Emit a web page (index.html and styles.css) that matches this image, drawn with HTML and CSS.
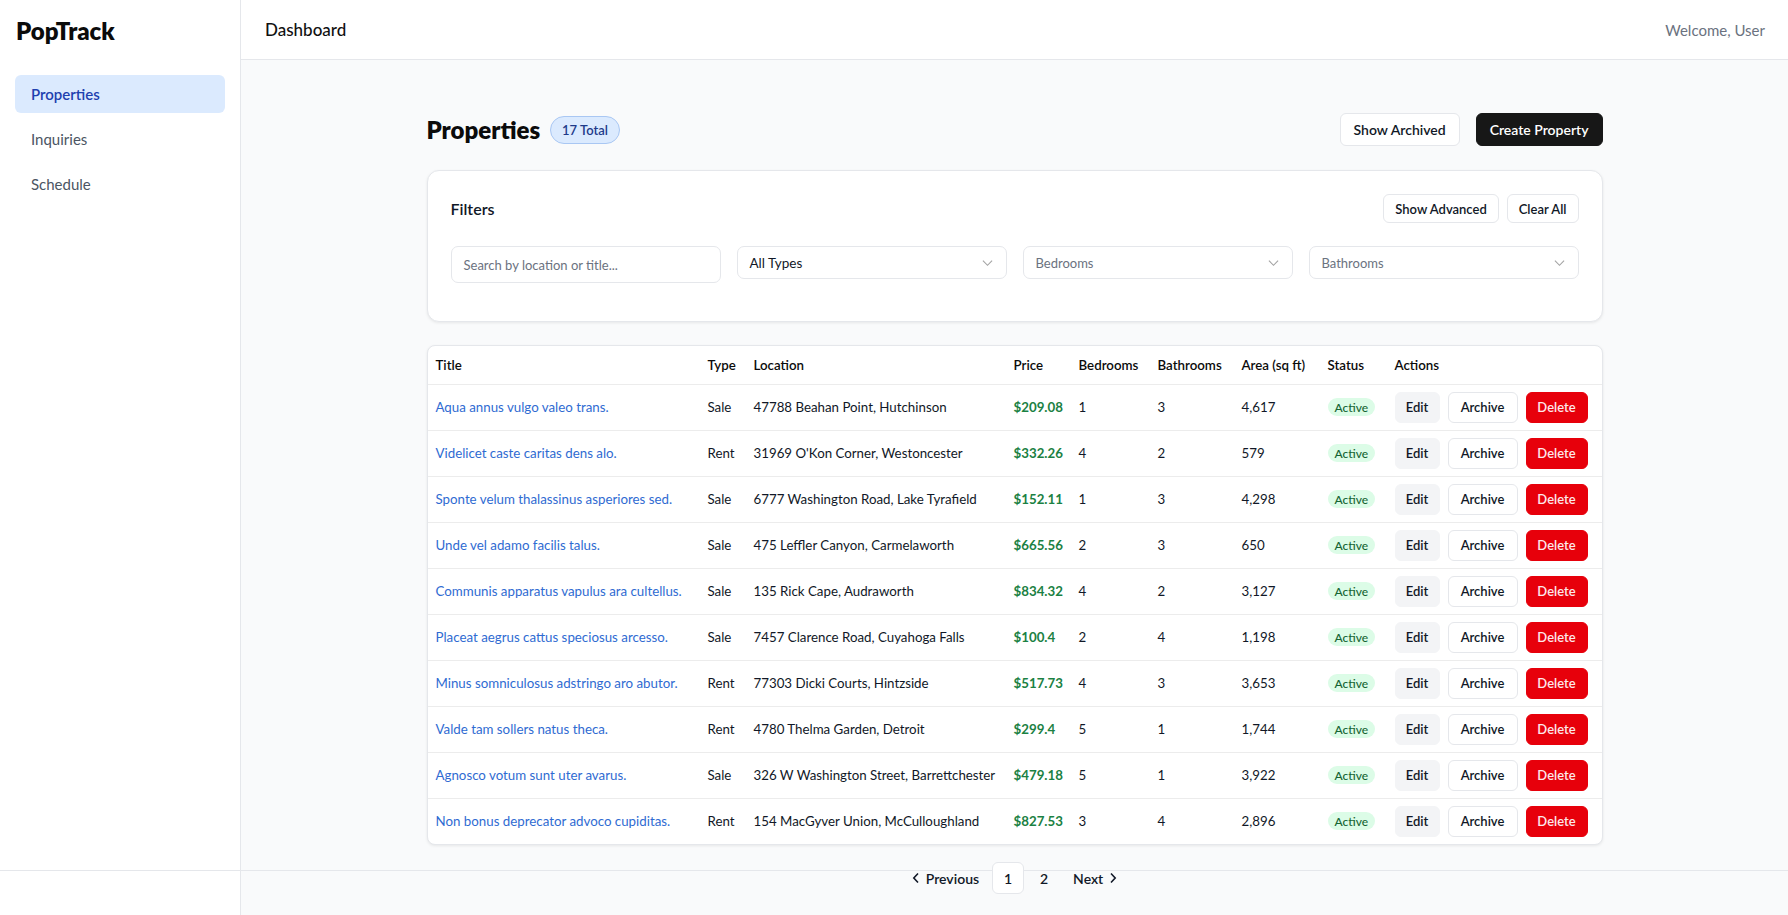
FILE: index.html
```html
<!DOCTYPE html>
<html lang="en">
<head>
<meta charset="utf-8">
<title>PopTrack</title>
<link rel="stylesheet" href="styles.css">
</head>
<body>
<div class="app">
  <aside class="sidebar">
    <div class="brand">PopTrack</div>
    <nav class="nav">
      <a class="nav-item active">Properties</a>
      <a class="nav-item">Inquiries</a>
      <a class="nav-item">Schedule</a>
    </nav>
    <div class="side-footer"></div>
  </aside>
  <div class="main">
    <header class="topbar">
      <div class="topbar-title">Dashboard</div>
      <div class="welcome">Welcome, User</div>
    </header>
    <div class="content">
      <div class="container">
        <div class="page-head">
          <div class="page-title">
            <h1>Properties</h1>
            <span class="total-badge">17 Total</span>
          </div>
          <div class="head-actions">
            <button class="btn btn-outline btn-lg">Show Archived</button>
            <button class="btn btn-dark btn-lg">Create Property</button>
          </div>
        </div>

        <section class="card filters">
          <div class="filters-head">
            <h2>Filters</h2>
            <div class="filters-actions">
              <button class="btn btn-outline btn-sm">Show Advanced</button>
              <button class="btn btn-outline btn-sm">Clear All</button>
            </div>
          </div>
          <div class="filters-grid">
            <div class="input">Search by location or title...</div>
            <div class="select"><span class="val">All Types</span><svg class="chev" viewBox="0 0 12 8"><path d="M1 1.5l5 5 5-5"/></svg></div>
            <div class="select"><span class="ph">Bedrooms</span><svg class="chev" viewBox="0 0 12 8"><path d="M1 1.5l5 5 5-5"/></svg></div>
            <div class="select"><span class="ph">Bathrooms</span><svg class="chev" viewBox="0 0 12 8"><path d="M1 1.5l5 5 5-5"/></svg></div>
          </div>
        </section>

        <section class="card table-card">
          <table class="table">
            <thead>
              <tr>
                <th class="c-title">Title</th>
                <th class="c-type">Type</th>
                <th class="c-loc">Location</th>
                <th class="c-price">Price</th>
                <th class="c-bed">Bedrooms</th>
                <th class="c-bath">Bathrooms</th>
                <th class="c-area">Area (sq ft)</th>
                <th class="c-status">Status</th>
                <th class="c-actions">Actions</th>
              </tr>
            </thead>
            <tbody>
              <tr><td><a class="title-link">Aqua annus vulgo valeo trans.</a></td><td>Sale</td><td>47788 Beahan Point, Hutchinson</td><td class="price">$209.08</td><td>1</td><td>3</td><td>4,617</td><td><span class="status">Active</span></td><td><div class="row-actions"><button class="btn btn-soft">Edit</button><button class="btn btn-outline">Archive</button><button class="btn btn-danger">Delete</button></div></td></tr>
              <tr><td><a class="title-link">Videlicet caste caritas dens alo.</a></td><td>Rent</td><td>31969 O'Kon Corner, Westoncester</td><td class="price">$332.26</td><td>4</td><td>2</td><td>579</td><td><span class="status">Active</span></td><td><div class="row-actions"><button class="btn btn-soft">Edit</button><button class="btn btn-outline">Archive</button><button class="btn btn-danger">Delete</button></div></td></tr>
              <tr><td><a class="title-link">Sponte velum thalassinus asperiores sed.</a></td><td>Sale</td><td>6777 Washington Road, Lake Tyrafield</td><td class="price">$152.11</td><td>1</td><td>3</td><td>4,298</td><td><span class="status">Active</span></td><td><div class="row-actions"><button class="btn btn-soft">Edit</button><button class="btn btn-outline">Archive</button><button class="btn btn-danger">Delete</button></div></td></tr>
              <tr><td><a class="title-link">Unde vel adamo facilis talus.</a></td><td>Sale</td><td>475 Leffler Canyon, Carmelaworth</td><td class="price">$665.56</td><td>2</td><td>3</td><td>650</td><td><span class="status">Active</span></td><td><div class="row-actions"><button class="btn btn-soft">Edit</button><button class="btn btn-outline">Archive</button><button class="btn btn-danger">Delete</button></div></td></tr>
              <tr><td><a class="title-link">Communis apparatus vapulus ara cultellus.</a></td><td>Sale</td><td>135 Rick Cape, Audraworth</td><td class="price">$834.32</td><td>4</td><td>2</td><td>3,127</td><td><span class="status">Active</span></td><td><div class="row-actions"><button class="btn btn-soft">Edit</button><button class="btn btn-outline">Archive</button><button class="btn btn-danger">Delete</button></div></td></tr>
              <tr><td><a class="title-link">Placeat aegrus cattus speciosus arcesso.</a></td><td>Sale</td><td>7457 Clarence Road, Cuyahoga Falls</td><td class="price">$100.4</td><td>2</td><td>4</td><td>1,198</td><td><span class="status">Active</span></td><td><div class="row-actions"><button class="btn btn-soft">Edit</button><button class="btn btn-outline">Archive</button><button class="btn btn-danger">Delete</button></div></td></tr>
              <tr><td><a class="title-link">Minus somniculosus adstringo aro abutor.</a></td><td>Rent</td><td>77303 Dicki Courts, Hintzside</td><td class="price">$517.73</td><td>4</td><td>3</td><td>3,653</td><td><span class="status">Active</span></td><td><div class="row-actions"><button class="btn btn-soft">Edit</button><button class="btn btn-outline">Archive</button><button class="btn btn-danger">Delete</button></div></td></tr>
              <tr><td><a class="title-link">Valde tam sollers natus theca.</a></td><td>Rent</td><td>4780 Thelma Garden, Detroit</td><td class="price">$299.4</td><td>5</td><td>1</td><td>1,744</td><td><span class="status">Active</span></td><td><div class="row-actions"><button class="btn btn-soft">Edit</button><button class="btn btn-outline">Archive</button><button class="btn btn-danger">Delete</button></div></td></tr>
              <tr><td><a class="title-link">Agnosco votum sunt uter avarus.</a></td><td>Sale</td><td>326 W Washington Street, Barrettchester</td><td class="price">$479.18</td><td>5</td><td>1</td><td>3,922</td><td><span class="status">Active</span></td><td><div class="row-actions"><button class="btn btn-soft">Edit</button><button class="btn btn-outline">Archive</button><button class="btn btn-danger">Delete</button></div></td></tr>
              <tr><td><a class="title-link">Non bonus deprecator advoco cupiditas.</a></td><td>Rent</td><td>154 MacGyver Union, McCulloughland</td><td class="price">$827.53</td><td>3</td><td>4</td><td>2,896</td><td><span class="status">Active</span></td><td><div class="row-actions"><button class="btn btn-soft">Edit</button><button class="btn btn-outline">Archive</button><button class="btn btn-danger">Delete</button></div></td></tr>
            </tbody>
          </table>
        </section>
      </div>
    </div>
    <footer class="main-footer">
      <nav class="pagination">
        <button class="page-btn"><svg class="pchev" viewBox="0 0 8 12"><path d="M6 1.5L1.8 6 6 10.5"/></svg>Previous</button>
        <button class="page-num current">1</button>
        <button class="page-num">2</button>
        <button class="page-btn">Next<svg class="pchev" viewBox="0 0 8 12"><path d="M2 1.5L6.2 6 2 10.5"/></svg></button>
      </nav>
    </footer>
  </div>
</div>
</body>
</html>
```

FILE: styles.css
```css
* { box-sizing: border-box; }
html, body { margin: 0; padding: 0; height: 100%; }
body {
  font-family: Lato, "Liberation Sans", sans-serif;
  color: #111827;
  background: #f9fafb;
  overflow: hidden;
}
button { font-family: inherit; cursor: pointer; }

.app { display: flex; height: 915px; }

/* Sidebar */
.sidebar {
  width: 241px;
  flex: none;
  background: #fff;
  border-right: 1px solid #e5e7eb;
  display: flex;
  flex-direction: column;
}
.brand {
  height: 66px;
  padding: 16px 0 0 16px;
  font-size: 24px;
  font-weight: 800;
  color: #0b0b0b;
}
.nav {
  flex: 1;
  padding: 9px 15px 0;
  display: flex;
  flex-direction: column;
  gap: 7px;
}
.nav-item {
  height: 38px;
  display: flex;
  align-items: center;
  padding: 0 16px;
  border-radius: 6px;
  font-size: 15px;
  color: #4b5563;
}
.nav-item.active {
  background: #dbeafe;
  color: #1e40af;
  font-weight: 600;
}
.side-footer {
  height: 45px;
  border-top: 1px solid #e5e7eb;
}

/* Main */
.main {
  flex: 1;
  display: flex;
  flex-direction: column;
  min-width: 0;
}
.topbar {
  height: 60px;
  flex: none;
  background: #fff;
  border-bottom: 1px solid #e5e7eb;
  display: flex;
  align-items: center;
  justify-content: space-between;
  padding: 0 23px 0 24px;
}
.topbar-title { font-size: 17px; font-weight: 500; color: #111; }
.welcome { font-size: 15px; color: #6b7280; }

.content {
  flex: 1;
  padding-top: 53px;
}
.container {
  max-width: 1176px;
  margin: 0 auto;
}

.page-head {
  display: flex;
  align-items: center;
  justify-content: space-between;
  height: 33px;
  margin-bottom: 24px;
}
.page-title { display: flex; align-items: center; gap: 10px; }
.page-title h1 {
  margin: 0;
  font-size: 24px;
  font-weight: 800;
  color: #0b0b0b;
}
.total-badge {
  height: 28px;
  padding: 0 11px;
  display: inline-flex;
  align-items: center;
  border-radius: 999px;
  background: #dbeafe;
  border: 1px solid #a9c7f3;
  color: #1e3a8a;
  font-size: 13px;
  font-weight: 600;
}
.head-actions { display: flex; gap: 16px; }

.btn {
  display: inline-flex;
  align-items: center;
  justify-content: center;
  border-radius: 6px;
  border: 1px solid transparent;
  font-size: 13px;
  font-weight: 600;
  height: 31px;
  padding: 0 12px;
  color: #111827;
  background: #fff;
}
.btn-lg { height: 33px; font-size: 14px; padding: 0 13px; }
.btn-sm { height: 29px; font-size: 13px; padding: 0 11px; }
.btn-outline { background: #fff; border-color: #e5e7eb; }
.btn-dark { background: #171717; color: #fff; border-color: #171717; }
.btn-soft { background: #f3f4f6; border-color: #f3f4f6; }
.btn-danger { background: #e7000b; border-color: #e7000b; color: #fde8ea; }

.card {
  background: #fff;
  border: 1px solid #e5e7eb;
  box-shadow: 0 1px 3px rgba(0,0,0,0.08);
}

/* Filters */
.filters {
  border-radius: 12px;
  padding: 23px 23px 38px;
  margin-bottom: 23px;
}
.filters-head {
  display: flex;
  align-items: center;
  justify-content: space-between;
  margin-bottom: 23px;
}
.filters-head h2 { margin: 0; font-size: 16px; font-weight: 600; }
.filters-actions { display: flex; gap: 8px; }

.filters-grid {
  display: grid;
  grid-template-columns: repeat(4, 1fr);
  gap: 16px;
  align-items: start;
}
.input, .select {
  border: 1px solid #e5e7eb;
  border-radius: 7px;
  background: #fff;
  display: flex;
  align-items: center;
  padding: 0 12px;
  font-size: 13px;
}
.input { height: 37px; color: #6b7280; }
.select { height: 33px; justify-content: space-between; padding-right: 13px; }
.select .val { color: #111827; font-size: 13.5px; }
.select .ph { color: #6b7280; }
.chev { width: 11px; height: 8px; fill: none; stroke: #a3a3a3; stroke-width: 1.2; }

/* Table */
.table-card { border-radius: 8px; overflow: hidden; }
.table {
  width: 100%;
  border-collapse: collapse;
  table-layout: fixed;
  font-size: 13.3px;
}
.table th {
  height: 38px;
  text-align: left;
  font-weight: 600;
  padding: 0 8px;
  color: #0b0b0b;
}
.table td {
  height: 46px;
  padding: 0 8px;
  border-top: 1px solid #ececec;
  color: #111827;
  white-space: nowrap;
}
.c-title { width: 272px; }
.c-type { width: 46px; }
.c-loc { width: 260px; }
.c-price { width: 65px; }
.c-bed { width: 79px; }
.c-bath { width: 84px; }
.c-area { width: 86px; }
.c-status { width: 67px; }
.title-link { color: #2f6bd2; }
.table td.price { color: #1b8143; font-weight: 700; }
.status {
  display: inline-flex;
  align-items: center;
  height: 18px;
  padding: 0 7px;
  border-radius: 999px;
  background: #dcfce7;
  color: #166534;
  font-size: 12px;
  font-weight: 500;
}
.row-actions { display: flex; gap: 8px; }
.row-actions .btn-soft { width: 45px; }
.row-actions .btn-outline { width: 70px; }
.row-actions .btn-danger { width: 62px; }

/* Footer / pagination */
.main-footer {
  height: 45px;
  flex: none;
  border-top: 1px solid #e5e7eb;
}
.pagination {
  margin-top: -9px;
  display: flex;
  justify-content: center;
  align-items: center;
  gap: 4px;
}
.page-btn, .page-num {
  border: 1px solid transparent;
  background: transparent;
  font-size: 14px;
  font-weight: 600;
  color: #111827;
  height: 32px;
  border-radius: 6px;
  display: inline-flex;
  align-items: center;
  gap: 6px;
}
.page-btn { padding: 0 8px; }
.page-num { width: 32px; justify-content: center; padding: 0; }
.page-num.current { background: #fff; border-color: #e5e7eb; }
.pchev { width: 8px; height: 12px; fill: none; stroke: #111827; stroke-width: 1.6; }
```
